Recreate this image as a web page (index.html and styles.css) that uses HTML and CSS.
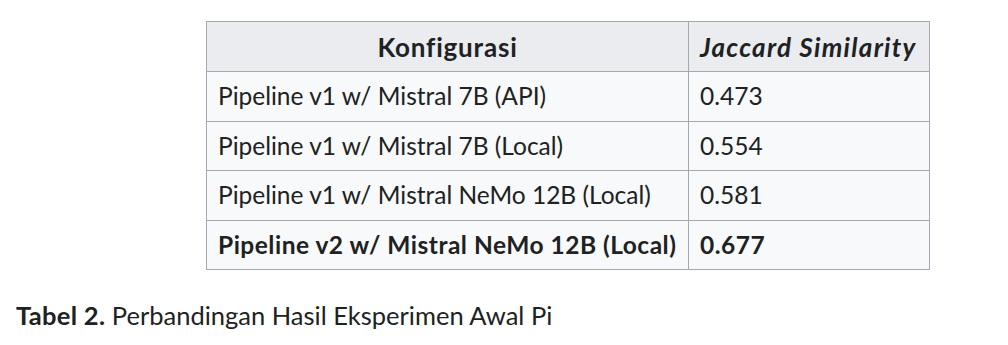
FILE: index.html
```html
<!DOCTYPE html>
<html lang="id">
<head>
<meta charset="utf-8">
<link rel="stylesheet" href="styles.css">
</head>
<body>
<figure class="figure">
  <table class="results">
    <thead>
      <tr><th class="col-config">Konfigurasi</th><th class="col-score"><em>Jaccard Similarity</em></th></tr>
    </thead>
    <tbody>
      <tr><td>Pipeline v1 w/ Mistral 7B (API)</td><td>0.473</td></tr>
      <tr><td>Pipeline v1 w/ Mistral 7B (Local)</td><td>0.554</td></tr>
      <tr><td>Pipeline v1 w/ Mistral NeMo 12B (Local)</td><td>0.581</td></tr>
      <tr class="best"><td>Pipeline v2 w/ Mistral NeMo 12B (Local)</td><td>0.677</td></tr>
    </tbody>
  </table>
  <figcaption class="caption"><strong>Tabel 2.</strong> Perbandingan Hasil Eksperimen Awal Pi</figcaption>
</figure>
</body>
</html>
```
FILE: styles.css
```css
html, body {
  margin: 0;
  padding: 0;
  background: #ffffff;
}
body {
  font-family: "Lato", "Liberation Sans", sans-serif;
  color: #202122;
  font-size: 24.5px;
}
.figure {
  margin: 0;
  padding: 21px 0 0 16px;
}
.results {
  border-collapse: collapse;
  margin-left: 190px;
  table-layout: fixed;
  background: #f8f9fa;
}
.results th,
.results td {
  border: 1px solid #a2a9b1;
  padding: 6px 11px;
  line-height: 36.5px;
  text-align: left;
  white-space: nowrap;
}
.results th {
  background: #eaecf0;
  font-weight: 700;
  font-size: 26px;
  line-height: 36px;
  text-align: center;
  padding-top: 7px;
  padding-bottom: 6px;
}
.results .col-config { width: 459px; letter-spacing: 0.8px; }
.results .col-score { width: 218px; text-align: left; letter-spacing: 1.3px; }
.results .best td { font-weight: 700; letter-spacing: 0.5px; }
.caption {
  margin-top: 27px;
  font-size: 25.5px;
  line-height: 36px;
}
.caption strong { font-weight: 700; letter-spacing: 0.3px; }
```
